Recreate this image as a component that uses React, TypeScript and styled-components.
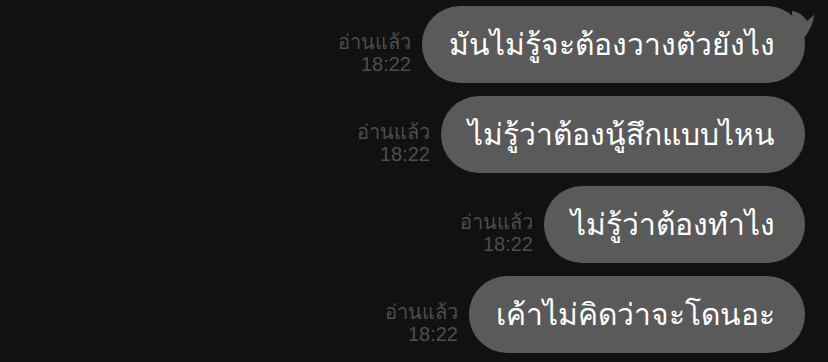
import React from 'react'
import styled, { createGlobalStyle } from 'styled-components'

const GlobalStyle = createGlobalStyle`
  html, body {
    margin: 0;
    padding: 0;
    background: #111111;
  }
  body {
    font-family: "Liberation Sans", "Noto Sans", sans-serif;
  }
`

const Chat = styled.div`
  width: 828px;
  height: 362px;
  box-sizing: border-box;
  padding: 6px 23px 0 0;
  display: flex;
  flex-direction: column;
  align-items: flex-end;
  gap: 13px;
  overflow: hidden;
`

const Row = styled.div`
  display: flex;
  align-items: stretch;
  gap: 11px;
`

const ReadInfo = styled.div`
  align-self: flex-end;
  display: flex;
  flex-direction: column;
  align-items: flex-end;
  padding-bottom: 8px;
  color: #4d4d4d;
  font-size: 20px;
  line-height: 22px;
`

const Bubble = styled.div`
  position: relative;
  height: 77px;
  box-sizing: border-box;
  padding: 0 30px 0 27px;
  display: flex;
  align-items: center;
  background: #5a5a5a;
  color: #ffffff;
  font-size: 30px;
  border-radius: 38px;
  white-space: nowrap;
`

const Tail = styled.svg`
  position: absolute;
  top: 0;
  right: -11px;
  width: 24px;
  height: 32px;
`

type Message = { text: string; tail?: boolean }

const messages: Message[] = [
  { text: 'มันไม่รู้จะต้องวางตัวยังไง', tail: true },
  { text: 'ไม่รู้ว่าต้องนู้สึกแบบไหน' },
  { text: 'ไม่รู้ว่าต้องทำไง' },
  { text: 'เค้าไม่คิดว่าจะโดนอะ' },
]

export default function App() {
  return (
    <>
      <GlobalStyle />
      <Chat>
        {messages.map((m, i) => (
          <Row key={i}>
            <ReadInfo>
              <span>อ่านแล้ว</span>
              <span>18:22</span>
            </ReadInfo>
            <Bubble>
              {m.text}
              {m.tail && (
                <Tail viewBox="0 0 24 32">
                  <path
                    d="M0 5 C8 6 13 12 15 15 C18 13 21 10 22 8 C22 16 18 24 12 32 L0 32 Z"
                    fill="#5a5a5a"
                  />
                </Tail>
              )}
            </Bubble>
          </Row>
        ))}
      </Chat>
    </>
  )
}
